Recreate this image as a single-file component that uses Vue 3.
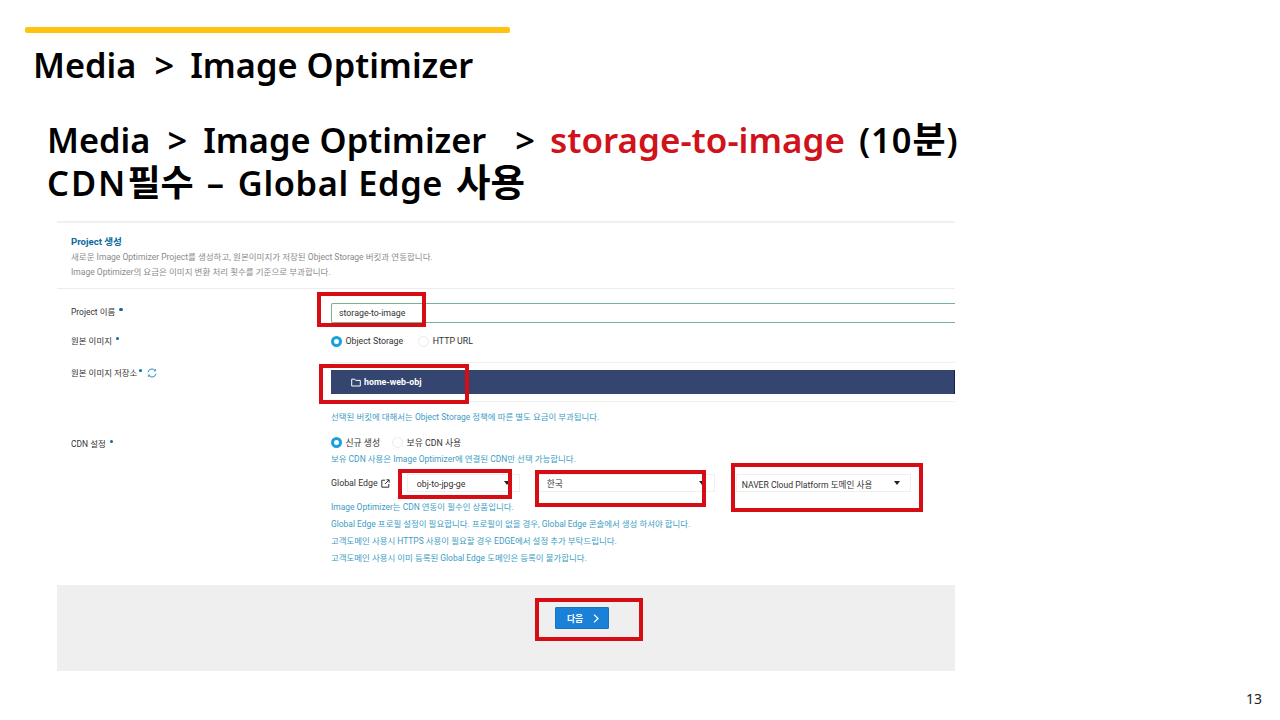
<script setup>
const hints = [
  'Image Optimizer는 CDN 연동이 필수인 상품입니다.',
  'Global Edge 프로필 설정이 필요합니다. 프로필이 없을 경우, Global Edge 콘솔에서 생성 하셔야 합니다.',
  '고객도메인 사용시 HTTPS 사용이 필요할 경우 EDGE에서 설정 추가 부탁드립니다.',
  '고객도메인 사용시 이미 등록된 Global Edge 도메인은 등록이 불가합니다.'
]
</script>

<template>
  <div class="slide">
    <div class="bar"></div>
    <h1 class="title">Media<span class="gt">&gt;</span>Image Optimizer</h1>
    <h2 class="sub">
      <span class="line">Media<span class="gt">&gt;</span>Image Optimizer<span class="gt gt2">&gt;</span><span class="red">storage-to-image</span><span class="paren">(10<span class="ko">분</span>)</span></span>
      <span class="line"><span class="cdn">CDN</span><span class="ko">필수</span><span class="dash">–</span><span class="ge">Global Edge</span><span class="ko use">사용</span></span>
    </h2>

    <section class="panel">
      <header class="head">
        <div class="head-title">Project 생성</div>
        <p>새로운 Image Optimizer Project를 생성하고, 원본이미지가 저장된 Object Storage 버킷과 연동합니다.</p>
        <p>Image Optimizer의 요금은 이미지 변환 처리 횟수를 기준으로 부과합니다.</p>
      </header>

      <div class="row row-name">
        <div class="label">Project 이름<i class="dot"></i></div>
        <div class="value"><div class="input">storage-to-image</div></div>
      </div>

      <div class="row row-origin">
        <div class="label">원본 이미지<i class="dot"></i></div>
        <div class="value radios">
          <span class="radio on"></span><span class="r-text first">Object Storage</span>
          <span class="radio"></span><span class="r-text">HTTP URL</span>
        </div>
      </div>

      <div class="row row-store">
        <div class="label">원본 이미지 저장소<i class="dot"></i><svg class="sync" width="10" height="10" viewBox="0 0 10 10" fill="none" stroke="#2a8fc0" stroke-width="1">
            <path d="M1 4.2A4 4 0 0 1 8 2.4" />
            <path d="M9 5.8A4 4 0 0 1 2 7.6" />
            <path d="M8.6 1v2H6.8M1.4 9V7h1.8" stroke-width=".8" />
          </svg>
        </div>
        <div class="value">
          <div class="bucket-wrap">
            <div class="bucket">
              <svg width="10" height="9" viewBox="0 0 10 9" fill="none" stroke="#fff" stroke-width="1">
                <path d="M.7 1.2h3l1 1.2h4.6v5.6H.7z" />
              </svg>
              <span>home-web-obj</span>
            </div>
          </div>
        </div>
      </div>

      <div class="row row-hint">
        <div></div>
        <div class="value hint">선택된 버킷에 대해서는 Object Storage 정책에 따른 별도 요금이 부과됩니다.</div>
      </div>

      <div class="row row-cdn">
        <div class="label">CDN 설정<i class="dot"></i></div>
        <div class="value">
          <div class="radios cdn-radios">
            <span class="radio on"></span><span class="r-text first2">신규 생성</span>
            <span class="radio"></span><span class="r-text">보유 CDN 사용</span>
          </div>
          <div class="hint cdn-hint">보유 CDN 사용은 Image Optimizer에 연결된 CDN만 선택 가능합니다.</div>
          <div class="edge">
            <span class="edge-label">Global Edge</span>
            <svg class="ext" width="9" height="9" viewBox="0 0 9 9" fill="none" stroke="#333" stroke-width="1">
              <path d="M4 1.2H.8v7h7V5M4 5l4-4M5.4.8h2.8v2.8" />
            </svg>
            <div class="select s1"><span>obj-to-jpg-ge</span><i class="caret"></i></div>
            <div class="select s2"><span>한국</span><i class="caret"></i></div>
            <div class="select s3"><span>NAVER Cloud Platform 도메인 사용</span><i class="caret"></i></div>
          </div>
          <div v-for="h in hints" :key="h" class="hint edge-hint">{{ h }}</div>
        </div>
      </div>

      <footer class="foot">
        <button class="next">다음
          <svg width="6" height="9" viewBox="0 0 6 9" fill="none" stroke="#fff" stroke-width="1.3"><path d="M1 .6l4 3.9-4 3.9" /></svg>
        </button>
      </footer>
    </section>

    <div class="page">13</div>

    <div class="mark m1"></div>
    <div class="mark m2"></div>
    <div class="mark m3"></div>
    <div class="mark m4"></div>
    <div class="mark m5"></div>
    <div class="mark m6"></div>
  </div>
</template>

<style>
html, body { margin: 0; background: #fff; }
</style>

<style scoped>
.slide {
  position: relative;
  width: 1280px;
  height: 720px;
  overflow: hidden;
  background: #fff;
  color: #000;
  font-family: "Noto Sans", "Noto Sans CJK KR", sans-serif;
}
.bar {
  width: 485px;
  height: 6px;
  margin: 27px 0 0 25px;
  background: #ffc20e;
  border-radius: 2px;
}
.title {
  margin: 9px 0 0 33px;
  font-size: 34.4px;
  line-height: 46px;
  font-weight: 600;
  white-space: nowrap;
}
.gt { display: inline-block; margin: 0 16px 0 18px; }
.sub {
  margin: 30px 0 0 47px;
  font-size: 34.4px;
  line-height: 43px;
  font-weight: 600;
  white-space: nowrap;
}
.sub .gt { margin: 0 16px 0 17px; }
.sub .gt2 { margin: 0 15px 0 29px; }
.line { display: block; height: 43px; }
.red { color: #d0121b; font-size: 35px; }
.paren { margin-left: 14px; letter-spacing: 1px; }
.ko { font-size: 36px; line-height: 1; font-weight: 600; }
.cdn { letter-spacing: 2px; }
.dash { margin: 0 14px 0 13px; }
.ge { letter-spacing: .6px; }
.ko.use { margin-left: 13px; font-size: 37.5px; }

.panel {
  width: 898px;
  height: 450px;
  margin: 17px 0 0 57px;
  border-top: 2px solid #f0f0f0;
  box-sizing: border-box;
  display: flex;
  flex-direction: column;
  font-family: Roboto, "Noto Sans CJK KR", sans-serif;
  font-size: 8.45px;
  color: #333;
}
.head {
  height: 66px;
  padding: 12px 0 0 14px;
  border-bottom: 1px solid #ececec;
  box-sizing: border-box;
}
.head-title {
  font-size: 9.6px;
  line-height: 13px;
  font-weight: 700;
  color: #0b6a9c;
}
.head p {
  margin: 2px 0 0;
  line-height: 13px;
  font-size: 8.52px;
  color: #8a8a8a;
}
.head-title + p { margin-top: 3px; }
.row {
  display: grid;
  grid-template-columns: 260px 1fr;
  padding-left: 14px;
}
.label {
  white-space: nowrap;
  line-height: 12px;
}
.dot {
  display: inline-block;
  width: 3.5px;
  height: 3.5px;
  margin-left: 4px;
  border-radius: 50%;
  background: #0b6a9c;
  vertical-align: 4px;
}
.row-store .dot { margin-left: 1.5px; }
.sync { margin-left: 5px; vertical-align: -2px; }
.row-name { height: 41px; padding-top: 14px; box-sizing: border-box; }
.row-name .label { padding-top: 3px; }
.input {
  height: 20px;
  box-sizing: border-box;
  border: 1px solid #74b493;
  border-right: 0;
  border-radius: 2px 0 0 2px;
  padding-left: 7px;
  line-height: 19px;
  font-size: 8.8px;
}
.row-origin { height: 22px; align-items: center; }
.radios { display: flex; align-items: center; }
.radio {
  width: 11px;
  height: 11px;
  box-sizing: border-box;
  border-radius: 50%;
  border: 1px solid #ebebeb;
  background: #fff;
}
.radio.on { border: 3px solid #1aa0dc; }
.r-text { margin-left: 3.5px; font-size: 8.8px; }
.r-text.first { margin-right: 15px; }
.r-text.first2 { margin-right: 12px; }
.row-store { height: 50px; padding-top: 10px; box-sizing: border-box; }
.row-store .label { padding-top: 5px; }
.bucket-wrap {
  height: 40px;
  box-sizing: border-box;
  padding-top: 7px;
  border-top: 1px solid #f0f0f0;
  border-bottom: 1px solid #f0f0f0;
}
.bucket {
  height: 24px;
  box-sizing: border-box;
  padding-left: 20px;
  display: flex;
  align-items: center;
  gap: 3px;
  background: #34466f;
  border-right: 1px solid #14204a;
  color: #fff;
  font-weight: 700;
  font-size: 8.8px;
}
.hint { color: #3c9cc4; line-height: 12px; white-space: nowrap; }
.row-hint { height: 25px; padding-top: 9px; box-sizing: border-box; }
.row-cdn { height: 158px; padding-top: 9px; box-sizing: border-box; }
.row-cdn .label { padding-top: 2px; }
.cdn-radios { height: 12px; }
.cdn-hint { margin-top: 5px; }
.edge {
  display: flex;
  align-items: center;
  height: 18px;
  margin: 9px 0 7px;
  font-size: 8.8px;
}
.edge-label { color: #333; }
.ext { margin-left: 3px; }
.select {
  height: 18px;
  box-sizing: border-box;
  border: 1px solid #efefef;
  display: flex;
  align-items: center;
  justify-content: space-between;
  background: #fff;
}
.select span { padding-top: 1px; }
.s1 { width: 113px; margin-left: 17px; padding: 0 9px; }
.s2 { width: 180px; margin-left: 15px; padding: 0 9px 0 11px; }
.s3 { width: 175px; margin-left: 21px; padding: 0 10px 0 5px; font-size: 8.6px; }
.caret {
  width: 0;
  height: 0;
  border: 3px solid transparent;
  border-top: 4px solid #222;
  border-bottom: 0;
}
.edge-hint { height: 17px; line-height: 17px; }

.foot {
  flex: 1;
  background: #efefef;
  display: flex;
  align-items: flex-start;
  padding: 22px 0 0 498px;
}
.next {
  width: 54px;
  height: 22px;
  border: 1px solid #1873c2;
  border-radius: 1px;
  background: #1b80d8;
  color: #fff;
  font-family: Roboto, "Noto Sans CJK KR", sans-serif;
  font-size: 8.8px;
  font-weight: 700;
  display: flex;
  align-items: center;
  justify-content: center;
  gap: 10px;
  padding: 0 0 0 2px;
  cursor: pointer;
}

.page {
  position: absolute;
  right: 18px;
  top: 689px;
  font-size: 14px;
  line-height: 19px;
  color: #222;
}
.mark {
  position: absolute;
  box-sizing: border-box;
  border: 4px solid #d60d14;
}
.m1 { left: 317px; top: 292px; width: 109px; height: 35px; }
.m2 { left: 319px; top: 364px; width: 150px; height: 40px; }
.m3 { left: 398px; top: 469px; width: 114px; height: 30px; }
.m4 { left: 535px; top: 470px; width: 171px; height: 37px; }
.m5 { left: 731px; top: 463px; width: 192px; height: 49px; }
.m6 { left: 535px; top: 598px; width: 108px; height: 43px; }
</style>
